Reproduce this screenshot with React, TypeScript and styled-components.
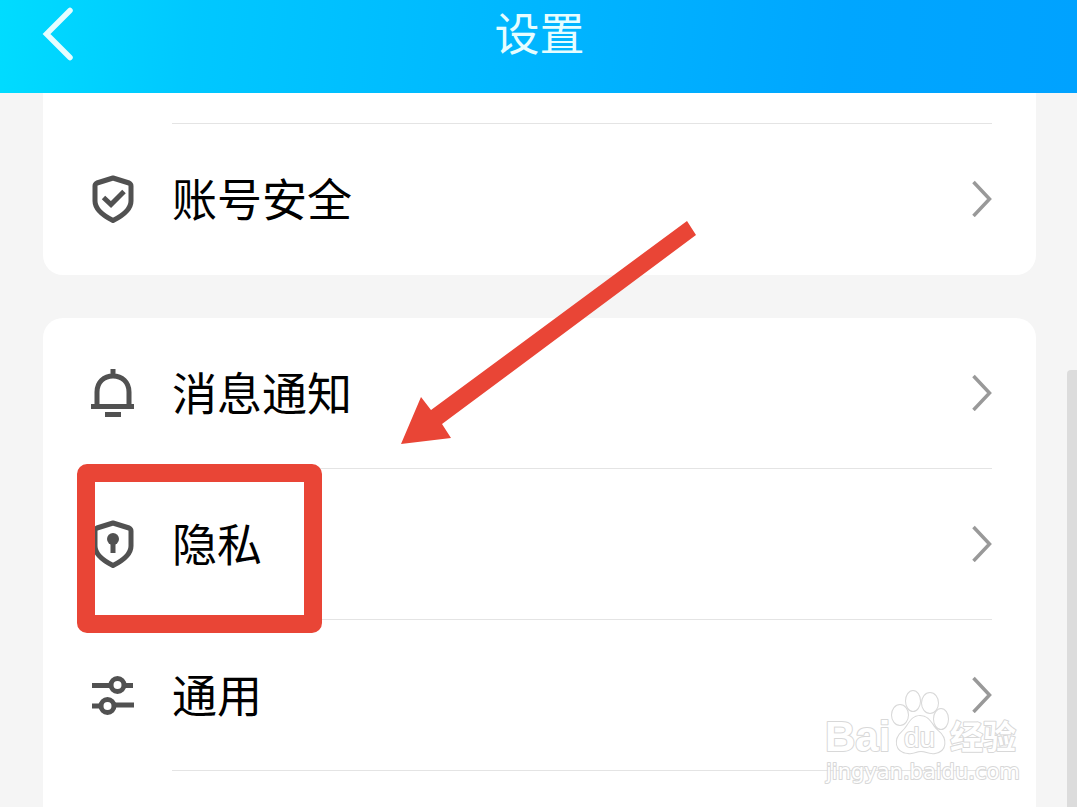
import React from 'react';
import styled, { createGlobalStyle } from 'styled-components';

const GlobalStyle = createGlobalStyle`
  *, *::before, *::after { box-sizing: border-box; }
  html, body, #root { height: 100%; }
  body {
    margin: 0;
    overflow: hidden;
    background: #f5f5f5;
    color: #000;
    font-family: 'Noto Sans CJK SC', sans-serif;
  }
`;

const Screen = styled.div`
  position: relative;
  display: flex;
  flex-direction: column;
  height: 100%;
  overflow: hidden;
`;

const Header = styled.header`
  flex: none;
  display: grid;
  grid-template-columns: 1fr auto 1fr;
  align-items: center;
  padding: 0 38px 29px 40px;
  background: linear-gradient(95deg, #00dcff 0%, #00c8ff 18%, #00b8ff 46%, #00a6ff 78%, #00a2ff 100%);
`;

const BackButton = styled.button`
  justify-self: start;
  display: flex;
  padding: 0;
  border: 0;
  background: none;
  color: #e6fdff;
  cursor: pointer;
`;

const Title = styled.h1`
  grid-column: 2;
  margin: 0;
  font-size: 45px;
  font-weight: 400;
  line-height: 64px;
  color: #e6fdff;
`;

const Content = styled.main`
  position: relative;
  flex: 1;
  min-height: 0;
  display: flex;
  flex-direction: column;
  gap: 43px;
  padding: 0 41px 0 43px;
`;

const Card = styled.section<{ $edge: 'top' | 'bottom' }>`
  position: relative;
  flex: ${({ $edge }) => ($edge === 'bottom' ? '1 0 auto' : 'none')};
  background: #fff;
  border-radius: ${({ $edge }) => ($edge === 'top' ? '0 0 20px 20px' : '20px 20px 0 0')};
`;

const Row = styled.a`
  position: relative;
  display: flex;
  align-items: center;
  gap: 37px;
  padding: 0 44px 0 48px;
  color: inherit;
  text-decoration: none;
`;

const RowIcon = styled.svg`
  flex: none;
  width: 44px;
  height: 50px;
  fill: none;
  stroke: #515151;
  stroke-width: 5;
`;

const RowBody = styled.span<{ $divided: boolean }>`
  flex: 1;
  display: flex;
  align-items: center;
  justify-content: space-between;
  height: 151px;
  padding-bottom: 2px;
  border-bottom: 1px solid ${({ $divided }) => ($divided ? '#e4e4e4' : 'transparent')};
`;

const RowLabel = styled.span`
  font-size: 45px;
  line-height: 60px;
`;

const RowTail = styled.div`
  height: 31px;
  margin: 0 44px 0 129px;
  border-bottom: 1px solid #e4e4e4;
`;

const Highlight = styled.span`
  position: absolute;
  z-index: 1;
  top: -5px;
  left: 34px;
  width: 245px;
  height: 169px;
  border: 18px solid #e94536;
  border-radius: 10px;
  pointer-events: none;
`;

const Arrow = styled.svg`
  position: absolute;
  top: 128px;
  left: 401px;
  width: 296px;
  height: 224px;
  fill: #e94536;
  pointer-events: none;
`;

const ScrollThumb = styled.div`
  position: absolute;
  top: 277px;
  right: 0;
  bottom: 0;
  width: 10px;
  border-radius: 4px 0 0 0;
  background: #dcdcdc;
`;

const Watermark = styled.svg`
  position: absolute;
  right: 54px;
  bottom: 20px;
  width: 200px;
  height: 100px;
  fill: #fff;
  stroke: #d4d4d4;
  stroke-width: 2;
  stroke-linejoin: round;
  paint-order: stroke;
  opacity: 0.9;
  pointer-events: none;
`;

const Chevron = () => (
  <svg width="20" height="38" viewBox="0 0 20 38" fill="none" stroke="#999" strokeWidth="3.500" aria-hidden="true">
    <path d="M1.500 3 17.500 20 1.500 37" />
  </svg>
);

const Shield = () => (
  <path d="M22 3 38 8Q40 9 40 11V26C40 35 31 41 22 45.500C13 41 4 35 4 26V11Q4 9 6 8Z" strokeLinejoin="round" />
);

const icons = {
  security: (
    <>
      <Shield />
      <path d="M12.500 22.500 20 29.500 33 16.500" />
    </>
  ),
  bell: (
    <>
      <path d="M22 0V8M6 37V23C6 13 13 7 22 7S38 13 38 23V37M0 37.500H43M14 45.500H30" />
    </>
  ),
  privacy: (
    <>
      <Shield />
      <circle cx="22" cy="19" r="6" fill="#515151" stroke="none" />
      <path d="M22 21V33" />
    </>
  ),
  general: (
    <>
      <path d="M1 14.500H20M33 14.500H42M1 35H10M22 34H43" />
      <circle cx="26.500" cy="14" r="6.500" />
      <circle cx="16.500" cy="35" r="6.500" />
    </>
  ),
};

interface ItemProps {
  icon: keyof typeof icons;
  label: string;
  divided?: boolean;
  highlighted?: boolean;
}

const Item = ({ icon, label, divided = false, highlighted = false }: ItemProps) => (
  <Row href="#">
    <RowIcon viewBox="0 0 44 50" aria-hidden="true">{icons[icon]}</RowIcon>
    <RowBody $divided={divided}>
      <RowLabel>{label}</RowLabel>
      <Chevron />
    </RowBody>
    {highlighted && <Highlight />}
  </Row>
);

export default function App() {
  return (
    <>
      <GlobalStyle />
      <Screen>
        <Header>
          <BackButton type="button" aria-label="返回">
            <svg width="34" height="60" viewBox="0 0 34 60" fill="none" stroke="currentColor" strokeWidth="5.500" aria-hidden="true">
              <path d="M30 8.500 6.500 32 30 55.500" strokeLinecap="round" />
            </svg>
          </BackButton>
          <Title>设置</Title>
        </Header>
        <Content>
          <Card $edge="top">
            <RowTail />
            <Item icon="security" label="账号安全" />
          </Card>
          <Card $edge="bottom">
            <Item icon="bell" label="消息通知" divided />
            <Item icon="privacy" label="隐私" divided highlighted />
            <Item icon="general" label="通用" divided />
          </Card>
          <Arrow viewBox="0 0 296 224" aria-hidden="true">
            <path d="M286 0 295 14 41 203 50 217 0 223 20 176 30 189Z" />
          </Arrow>
          <ScrollThumb />
        </Content>
        <Watermark viewBox="0 0 200 100" role="img" aria-label="Baidu 经验">
          <text x="2" y="64" fontFamily="'Liberation Sans', sans-serif" fontSize="42" fontWeight="700">Bai</text>
          <ellipse cx="77" cy="28" rx="8" ry="10" />
          <ellipse cx="90" cy="14" rx="7" ry="10" />
          <ellipse cx="107" cy="16" rx="8" ry="10" />
          <ellipse cx="118" cy="32" rx="7" ry="10" />
          <path d="M97 29C87 29 86 39 79 45C71 52 72 65 85 66C91 67 93 64 98 64S106 67 112 66C124 64 124 51 115 44C108 38 107 29 97 29Z" />
          <text x="81" y="60" fontFamily="'Liberation Sans', sans-serif" fontSize="28">du</text>
          <text x="127" y="62" fontFamily="'Noto Sans CJK SC', sans-serif" fontSize="33" fontWeight="700">经验</text>
          <text x="3" y="92" fontFamily="'DejaVu Sans', sans-serif" fontSize="21">jingyan.baidu.com</text>
        </Watermark>
      </Screen>
    </>
  );
}
